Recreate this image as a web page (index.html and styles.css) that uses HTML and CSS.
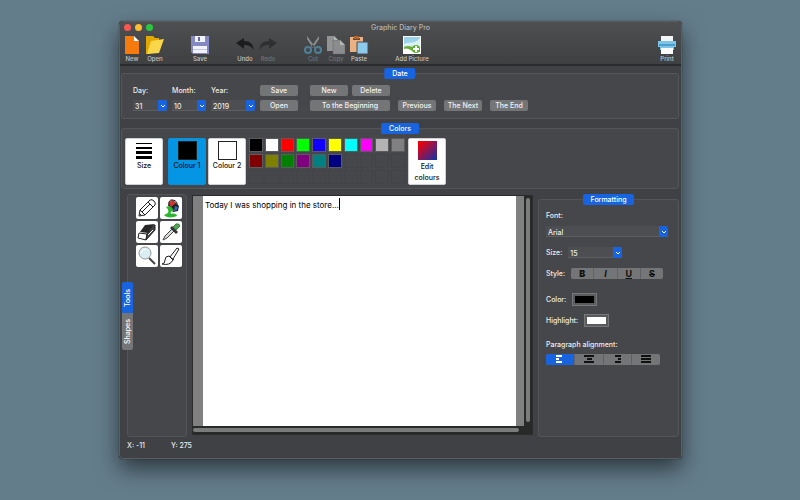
FILE: index.html
```html
<!DOCTYPE html>
<html lang="en">
<head>
    <meta charset="UTF-8">
    <meta name="viewport" content="width=device-width, initial-scale=1.0">
    <title>Graphic Diary Pro</title>
    <link rel="stylesheet" href="styles.css">
</head>
<body>
    <div class="window">
        <header class="titlebar">
            <div class="lights"><span class="light red"></span><span class="light amber"></span><span class="light green"></span></div>
            <h1>Graphic Diary Pro</h1>
            <nav class="toolbar">
                <button class="tool-item new">
                    <svg viewBox="0 0 20 20"><path fill="#f57c0c" d="M3 1h9v5h5v13H3z"/><path fill="#fff" d="M12 1l5 5h-5z"/></svg>
                    <span>New</span>
                </button>
                <button class="tool-item open">
                    <svg viewBox="0 0 20 20"><path fill="#e0a800" d="M1 1h7l2 2h4v4L5 19H1z"/><path fill="#f9d74a" d="M6 6l13-2-5 14-12 1z"/></svg>
                    <span>Open</span>
                </button>
                <button class="tool-item save">
                    <svg viewBox="0 0 20 20"><path fill="#8489c4" d="M1 1h18v18H3l-2-2z"/><path fill="#f1f2fa" d="M5 1h10v6H5zM3 11h14v7H3z"/><path fill="#6267a5" d="M8 2h2v4H8z"/><path fill="#c5c8e4" d="M3 14h14v1H3z"/></svg>
                    <span>Save</span>
                </button>
                <button class="tool-item undo">
                    <svg viewBox="0 0 20 20"><path fill="#1c1d1e" d="M1 8l8-5v3c6 0 9 3 10 9-3-4-6-5-10-5v4z"/></svg>
                    <span>Undo</span>
                </button>
                <button class="tool-item redo" disabled>
                    <svg viewBox="0 0 20 20"><path fill="#2f3031" d="M19 8l-8-5v3C5 6 2 9 1 15c3-4 6-5 10-5v4z"/></svg>
                    <span>Redo</span>
                </button>
                <button class="tool-item cut" disabled>
                    <svg viewBox="0 0 20 20"><path fill="#8d8e8f" d="M4 1l8 11-2 1L4 4zM16 1L8 12l2 1 6-9z"/><g fill="none" stroke="#4e7f99" stroke-width="2"><circle cx="5" cy="15" r="3"/><circle cx="15" cy="15" r="3"/></g></svg>
                    <span>Cut</span>
                </button>
                <button class="tool-item copy" disabled>
                    <svg viewBox="0 0 20 20"><path fill="#929394" d="M1 1h7l4 4v11H1z"/><path fill="#8b8c8d" stroke="#5f6061" stroke-width=".5" d="M7 5h7l5 5v9H7z"/><path fill="#b4b5b5" d="M14 5l5 5h-5zM8 1l4 4H8z"/></svg>
                    <span>Copy</span>
                </button>
                <button class="tool-item paste">
                    <svg viewBox="0 0 20 20"><path fill="#e9b184" d="M1 2h13v15H1z"/><path fill="#5f4a3c" d="M4 3h7v2H4z"/><path fill="#b5652c" d="M5 1h5v3H5z"/><path fill="#8ccbee" stroke="#4a4b4c" d="M8 7h11v12H8z"/></svg>
                    <span>Paste</span>
                </button>
                <button class="tool-item picture">
                    <svg viewBox="0 0 20 20"><path fill="#fff" d="M1 1h18v18H1z"/><path fill="#9bd4e8" d="M2 2h16v12H2z"/><path fill="#d9f1f6" d="M2 9c5-3 10 1 16-6v9H2z"/><path fill="#6cab3a" d="M2 12c6-3 9 2 16 1v4H2z"/><path fill="#fff" d="M2 14c4-2 7 2 11 3H2z"/><circle cx="14" cy="14" r="4" fill="#5bb02e"/><path fill="#fff" d="M13 11h2v2h2v2h-2v2h-2v-2h-2v-2h2z"/></svg>
                    <span>Add Picture</span>
                </button>
                <button class="tool-item print">
                    <svg viewBox="0 0 20 20"><path fill="#f4f4f4" d="M4 1h12v6H4z"/><path fill="#7cc5ea" d="M1 6h18v6h-2v3H3v-3H1z"/><path fill="#4e9ecb" d="M2 9h16v2H2z"/><path fill="#fafafa" d="M4 13h12v6H4z"/></svg>
                    <span>Print</span>
                </button>
            </nav>
        </header>

        <main>
            <section class="panel date">
                <h2 class="tab">Date</h2>
                <div class="field day">
                    <label for="day">Day:</label>
                    <div class="combo"><select id="day"><option>31</option></select><svg class="arrow" viewBox="0 0 9 11"><path d="M3 5l2 2 2-2"/></svg></div>
                </div>
                <div class="field month">
                    <label for="month">Month:</label>
                    <div class="combo"><select id="month"><option>10</option></select><svg class="arrow" viewBox="0 0 9 11"><path d="M3 5l2 2 2-2"/></svg></div>
                </div>
                <div class="field year">
                    <label for="year">Year:</label>
                    <div class="combo"><select id="year"><option>2019</option></select><svg class="arrow" viewBox="0 0 9 11"><path d="M3 5l2 2 2-2"/></svg></div>
                </div>
                <div class="rows file-buttons">
                    <button class="btn">Save</button>
                    <button class="btn">Open</button>
                </div>
                <div class="rows">
                    <div class="row pair">
                        <button class="btn">New</button>
                        <button class="btn">Delete</button>
                    </div>
                    <div class="row">
                        <button class="btn wide">To the Beginning</button>
                        <button class="btn">Previous</button>
                        <button class="btn">The Next</button>
                        <button class="btn">The End</button>
                    </div>
                </div>
            </section>

            <section class="panel colors">
                <h2 class="tab">Colors</h2>
                <button class="card size">
                    <svg viewBox="0 0 20 20"><path d="M2 2h16v1H2zM2 6h16v2H2zM2 10h16v3H2zM2 15h16v3H2z"/></svg>
                    <span>Size</span>
                </button>
                <button class="card active"><span class="chip black"></span><span>Colour 1</span></button>
                <button class="card"><span class="chip white"></span><span>Colour 2</span></button>
                <div class="palette">
                    <button class="black" aria-label="Black"></button>
                    <button class="white" aria-label="White"></button>
                    <button class="bright-red" aria-label="Red"></button>
                    <button class="lime" aria-label="Lime"></button>
                    <button class="blue" aria-label="Blue"></button>
                    <button class="yellow" aria-label="Yellow"></button>
                    <button class="cyan" aria-label="Cyan"></button>
                    <button class="magenta" aria-label="Magenta"></button>
                    <button class="silver" aria-label="Silver"></button>
                    <button class="gray" aria-label="Gray"></button>
                    <button class="maroon" aria-label="Maroon"></button>
                    <button class="olive" aria-label="Olive"></button>
                    <button class="dark-green" aria-label="Green"></button>
                    <button class="purple" aria-label="Purple"></button>
                    <button class="teal" aria-label="Teal"></button>
                    <button class="navy" aria-label="Navy"></button>
                    <i></i><i></i><i></i><i></i>
                    <i></i><i></i><i></i><i></i><i></i><i></i><i></i><i></i><i></i><i></i>
                </div>
                <button class="card edit"><span class="chip mix"></span><span>Edit colours</span></button>
            </section>

            <div class="workspace">
                <aside class="panel tools">
                    <div class="side-tabs">
                        <button class="selected">Tools</button>
                        <button>Shapes</button>
                    </div>
                    <div class="tool-grid">
                        <button aria-label="Pencil"><svg viewBox="0 0 22 22"><path class="line" d="M3 19l1-6L14 3q2-1 4 1t1 4L9 18zM4 13l5 5M12 5l5 5M6 15l8-8M4 17l1 1"/></svg></button>
                        <button aria-label="Fill"><svg viewBox="0 0 22 22"><path fill="#222" d="M8 8l5-5 6 6-1 5-5 1z"/><path fill="#c33" d="M8 6l4-3 4 3-5 4z"/><path fill="#36b" d="M15 9l3 1-1 3-3 1z"/><path class="line" d="M9 9Q8 2 13 3t4 6"/><path fill="#2eb52e" d="M6 10c4-2 6 0 8 4-3 0-4 1-3 3 3-1 6 0 6 2-4 2-11 2-13-1l4-2c1-2 0-4-2-6z"/></svg></button>
                        <button aria-label="Eraser"><svg viewBox="0 0 22 22"><path fill="#262626" d="M9 4l10-1-7 9-8-1z"/><path fill="#fff" stroke="#222" d="M3 12l8 1-1 6-8-2z"/><path fill="#444" stroke="#222" d="M11 13l8-9v5l-9 10z"/><path stroke="#fff" d="M12 14l5-5"/></svg></button>
                        <button aria-label="Eyedropper"><svg viewBox="0 0 22 22"><path fill="#d7ded7" stroke="#444" d="M3 19l2-4 7-7 2 2-7 7z"/><path fill="#333" d="M10 7l2-2 6 6-2 2z"/><path fill="#55a558" stroke="#347a38" d="M13 6l3-3q3-1 4 2l-4 4z"/></svg></button>
                        <button aria-label="Zoom"><svg viewBox="0 0 22 22"><path stroke="#444" stroke-width="2" d="M13 13l6 6"/><circle cx="9" cy="8" r="6" fill="#d8eef2" stroke="#999" stroke-width="1"/><path fill="none" stroke="#fff" d="M5 8q1-4 5-4"/></svg></button>
                        <button aria-label="Brush"><svg viewBox="0 0 22 22"><path class="line" d="M10 12l7-9 2 1-6 10M9 11q-4 0-4 4t-3 4q8 2 11-4zM9 11l5 4"/></svg></button>
                    </div>
                </aside>

                <div class="editor">
                    <div class="paper">
                        <textarea aria-label="Diary page" spellcheck="false">Today I was shopping in the store...</textarea>
                        <span class="caret"></span>
                    </div>
                    <div class="track vertical"><span></span></div>
                    <div class="track horizontal"><span></span></div>
                </div>

                <section class="panel formatting">
                    <h2 class="tab">Formatting</h2>
                    <label for="font">Font:</label>
                    <div class="combo font"><select id="font"><option>Arial</option></select><svg class="arrow" viewBox="0 0 9 11"><path d="M3 5l2 2 2-2"/></svg></div>
                    <div class="line-row size-row">
                        <label for="size">Size:</label>
                        <div class="combo"><select id="size"><option>15</option></select><svg class="arrow" viewBox="0 0 9 11"><path d="M3 5l2 2 2-2"/></svg></div>
                    </div>
                    <div class="line-row style-row">
                        <span>Style:</span>
                        <div class="segments">
                            <button><b>B</b></button>
                            <button><i>I</i></button>
                            <button><u>U</u></button>
                            <button><s>S</s></button>
                        </div>
                    </div>
                    <div class="line-row color-row">
                        <label for="color">Color:</label>
                        <input type="color" id="color" value="#000000">
                    </div>
                    <div class="line-row highlight-row">
                        <label for="highlight">Highlight:</label>
                        <input type="color" id="highlight" value="#ffffff">
                    </div>
                    <p>Paragraph alignment:</p>
                    <div class="segments align">
                        <button class="selected" aria-label="Left"><svg viewBox="0 0 12 9"><path d="M2 0h6v2H2zM2 3h3v2H2zM2 6h6v2H2z"/></svg></button>
                        <button aria-label="Center"><svg viewBox="0 0 12 9"><path d="M1 0h10v2H1zM4 3h5v2H4zM1 6h10v2H1z"/></svg></button>
                        <button aria-label="Right"><svg viewBox="0 0 12 9"><path d="M4 0h6v2H4zM7 3h3v2H7zM4 6h6v2H4z"/></svg></button>
                        <button aria-label="Justify"><svg viewBox="0 0 12 9"><path d="M1 0h10v2H1zM1 3h10v2H1zM1 6h10v2H1z"/></svg></button>
                    </div>
                </section>
            </div>
        </main>

        <footer class="status"><span>X: -11</span><span>Y: 275</span></footer>
    </div>
</body>
</html>
```
FILE: styles.css
```css
* {
    box-sizing: border-box;
}
body {
    margin: 0;
    min-height: 100vh;
    padding: 21px 118px 41px 119px;
    display: flex;
    background-color: #647d8b;
    font-family: Inter, "Liberation Sans", sans-serif;
    font-size: 7px;
    line-height: 9px;
    font-weight: 500;
    color: #ececed;
}
button, select, textarea {
    margin: 0;
    padding: 0;
    border: 0;
    font: inherit;
    color: inherit;
    background: none;
}
h1, h2, p {
    margin: 0;
    font-size: 7px;
    font-weight: 500;
}
svg {
    display: block;
}
.window {
    flex: 1;
    display: flex;
    flex-direction: column;
    border: 1px solid #5c5d5f;
    border-radius: 4px;
    background-color: #404144;
    box-shadow: 0 0 1px #111, 0 10px 22px rgba(0, 0, 0, 0.55);
}

/* title bar */
.titlebar {
    position: relative;
    height: 44px;
    border-bottom: 2px solid #2a2b2c;
    border-radius: 3px 3px 0 0;
    background: linear-gradient(#4e4f50, #3f4041);
}
.titlebar h1 {
    padding-top: 1px;
    text-align: center;
    color: #b4b5b6;
}
.lights {
    position: absolute;
    top: 2px;
    left: 4px;
    display: flex;
    gap: 4px;
}
.light {
    width: 7px;
    height: 7px;
    border-radius: 50%;
}
.red { background-color: #fc5652; }
.amber { background-color: #fdbc2f; }
.green { background-color: #2ac63f; }
.toolbar {
    display: flex;
    padding: 3px 3px 0 1px;
    font-size: 6px;
    line-height: 8px;
    color: #c4c5c6;
}
.tool-item {
    width: 22px;
    white-space: nowrap;
    display: flex;
    flex-direction: column;
    align-items: center;
}
.tool-item svg {
    width: 20px;
    height: 20px;
}
.tool-item:disabled {
    color: #737475;
}
.save, .undo, .cut { margin-left: 23px; }
.open, .redo, .copy, .paste { margin-left: 1px; }
.picture {
    width: 36px;
    margin-left: 24px;
}
.print { margin-left: auto; }

/* panels */
main {
    flex: 1;
    display: flex;
    flex-direction: column;
    padding: 7px 2px 0 1px;
}
.panel {
    position: relative;
    border: 1px solid #545557;
    border-radius: 3px;
    background-color: #46474a;
}
.tab {
    position: absolute;
    top: -6px;
    left: 50%;
    transform: translateX(-50%);
    padding: 1px 8px;
    border-radius: 2px;
    background-color: #1863e0;
    color: #fff;
}
.btn {
    width: 38px;
    height: 11px;
    border-radius: 2px;
    background-color: #747577;
    color: #f2f2f2;
}
.btn.wide {
    width: 80px;
}

/* combo boxes */
.combo {
    position: relative;
    height: 11px;
    background-color: #4d4e51;
    border-bottom: 1px solid #5c5d60;
}
.combo select {
    display: block;
    width: 100%;
    height: 12px;
    padding-left: 2px;
    appearance: none;
}
.arrow {
    position: absolute;
    top: 0;
    right: 0;
    width: 9px;
    height: 11px;
    border-radius: 0 2px 2px 0;
    background-color: #1863e0;
    pointer-events: none;
}
.arrow path {
    fill: none;
    stroke: #fff;
}

/* date */
.date {
    display: flex;
    height: 46px;
    padding: 11px 10px 0 11px;
}
.field {
    display: flex;
    flex-direction: column;
    gap: 5px;
    padding-top: 1px;
    margin-right: 5px;
}
.day, .month { width: 34px; }
.year { width: 44px; }
.rows {
    display: flex;
    flex-direction: column;
    gap: 4px;
}
.file-buttons {
    margin-right: 12px;
}
.row {
    display: flex;
    gap: 8px;
}
.pair {
    gap: 4px;
}

/* colors */
.colors {
    display: flex;
    height: 61px;
    margin-top: 9px;
    padding: 9px 3px 0;
}
.card {
    width: 38px;
    height: 47px;
    padding-top: 2px;
    border: 1px solid #d0d0d1;
    border-radius: 2px;
    display: flex;
    flex-direction: column;
    align-items: center;
    background-color: #fff;
    color: #111;
}
.card svg {
    width: 20px;
    height: 20px;
}
.card.size {
    margin-right: 5px;
}
.card.active {
    margin-right: 2px;
    border-color: #0c8fdb;
    background-color: #0496e5;
}
.card.edit {
    margin-left: 3px;
    line-height: 11px;
}
.chip {
    width: 19px;
    height: 19px;
    margin-bottom: 1px;
    border: 1px solid #222;
}
.mix {
    border: 0;
    background: linear-gradient(135deg, #f00008 10%, #1b30a5 95%);
}
.palette {
    display: grid;
    grid-template-columns: repeat(10, 1fr);
    grid-auto-rows: 14px;
    gap: 2px;
    width: 156px;
    margin-left: 3px;
}
.palette button {
    border: 1px solid #5a5b5d;
}
.palette i {
    border: 1px solid #424346;
}
.black { background-color: #000; }
.white { background-color: #fff; }
.bright-red { background-color: #f00; }
.lime { background-color: #0f0; }
.blue { background-color: #10f; }
.yellow { background-color: #ff0; }
.cyan { background-color: #0ff; }
.magenta { background-color: #f0f; }
.silver { background-color: #b3b3b3; }
.gray { background-color: #808080; }
.maroon { background-color: #800000; }
.olive { background-color: #808000; }
.dark-green { background-color: #008000; }
.purple { background-color: #800080; }
.teal { background-color: #008080; }
.navy { background-color: #000080; }

/* workspace */
.workspace {
    flex: 1;
    display: flex;
    margin-top: 5px;
}
.tools {
    width: 60px;
    margin-left: 6px;
    padding: 2px 0 0 8px;
}
.side-tabs {
    position: absolute;
    top: 87px;
    left: -6px;
    display: flex;
    flex-direction: column;
}
.side-tabs button {
    width: 11px;
    height: 37px;
    writing-mode: vertical-rl;
    transform: rotate(180deg);
    border-radius: 2px 2px 0 0;
    background-color: #747577;
    color: #fff;
}
.side-tabs .selected {
    height: 31px;
    border-radius: 0 0 2px 2px;
    background-color: #1863e0;
}
.tool-grid {
    display: grid;
    grid-template-columns: repeat(2, 22px);
    gap: 2px;
}
.tool-grid button {
    height: 22px;
    border-radius: 2px;
    background-color: #fff;
}
.tool-grid svg {
    width: 22px;
    height: 22px;
}
.line {
    fill: none;
    stroke: #222;
}
.editor {
    flex: 1;
    display: grid;
    grid-template: 1fr 8px / 1fr 8px;
    margin: 1px 5px 2px;
    border: 1px solid #2b2c2d;
    background-color: #282929;
}
.paper {
    position: relative;
    padding: 0 8px 0 10px;
    background-color: #808080;
}
.paper textarea {
    display: block;
    width: 100%;
    height: 100%;
    padding: 4px 2px;
    resize: none;
    outline: 0;
    background-color: #fff;
    color: #000;
    font-size: 8px;
    line-height: 10px;
    font-weight: 400;
}
.caret {
    position: absolute;
    top: 2px;
    left: 146px;
    width: 1px;
    height: 12px;
    background-color: #000;
}
.track {
    display: flex;
    padding: 2px;
}
.track span {
    flex: 1;
    border-radius: 2px;
    background-color: #7a7b7b;
}
.vertical {
    padding-bottom: 4px;
}
.horizontal {
    padding-left: 0;
    padding-right: 5px;
}

/* formatting */
.formatting {
    width: 141px;
    margin-top: 5px;
    padding: 11px 10px 0 7px;
}
.font {
    margin-top: 6px;
}
.line-row {
    display: flex;
    align-items: center;
    gap: 6px;
}
.size-row, .style-row {
    margin-top: 10px;
}
.size-row .combo {
    width: 54px;
}
.color-row {
    margin-top: 14px;
}
.highlight-row {
    margin-top: 8px;
}
.segments {
    display: flex;
    width: 92px;
    height: 11px;
    border-radius: 2px;
    overflow: hidden;
    background-color: #747577;
    color: #111;
    font-size: 9px;
    font-weight: 700;
}
.segments button {
    flex: 1;
    display: flex;
    align-items: center;
    justify-content: center;
}
.segments button + button {
    border-left: 1px solid #616264;
}
.segments svg {
    width: 12px;
    height: 9px;
    fill: #111;
}
.segments .selected {
    background-color: #1863e0;
}
.segments .selected svg {
    fill: #fff;
}
input[type="color"] {
    width: 25px;
    height: 13px;
    margin: 0;
    padding: 2px;
    border: 1px solid #77787a;
    background-color: #5a5b5d;
    appearance: none;
}
input[type="color"]::-webkit-color-swatch-wrapper {
    padding: 0;
}
input[type="color"]::-webkit-color-swatch {
    border: 0;
    border-radius: 0;
}
.formatting p {
    margin-top: 13px;
}
.align {
    width: 114px;
    margin-top: 5px;
}

/* status */
.status {
    display: flex;
    gap: 26px;
    height: 21px;
    padding: 4px 7px;
}
```
